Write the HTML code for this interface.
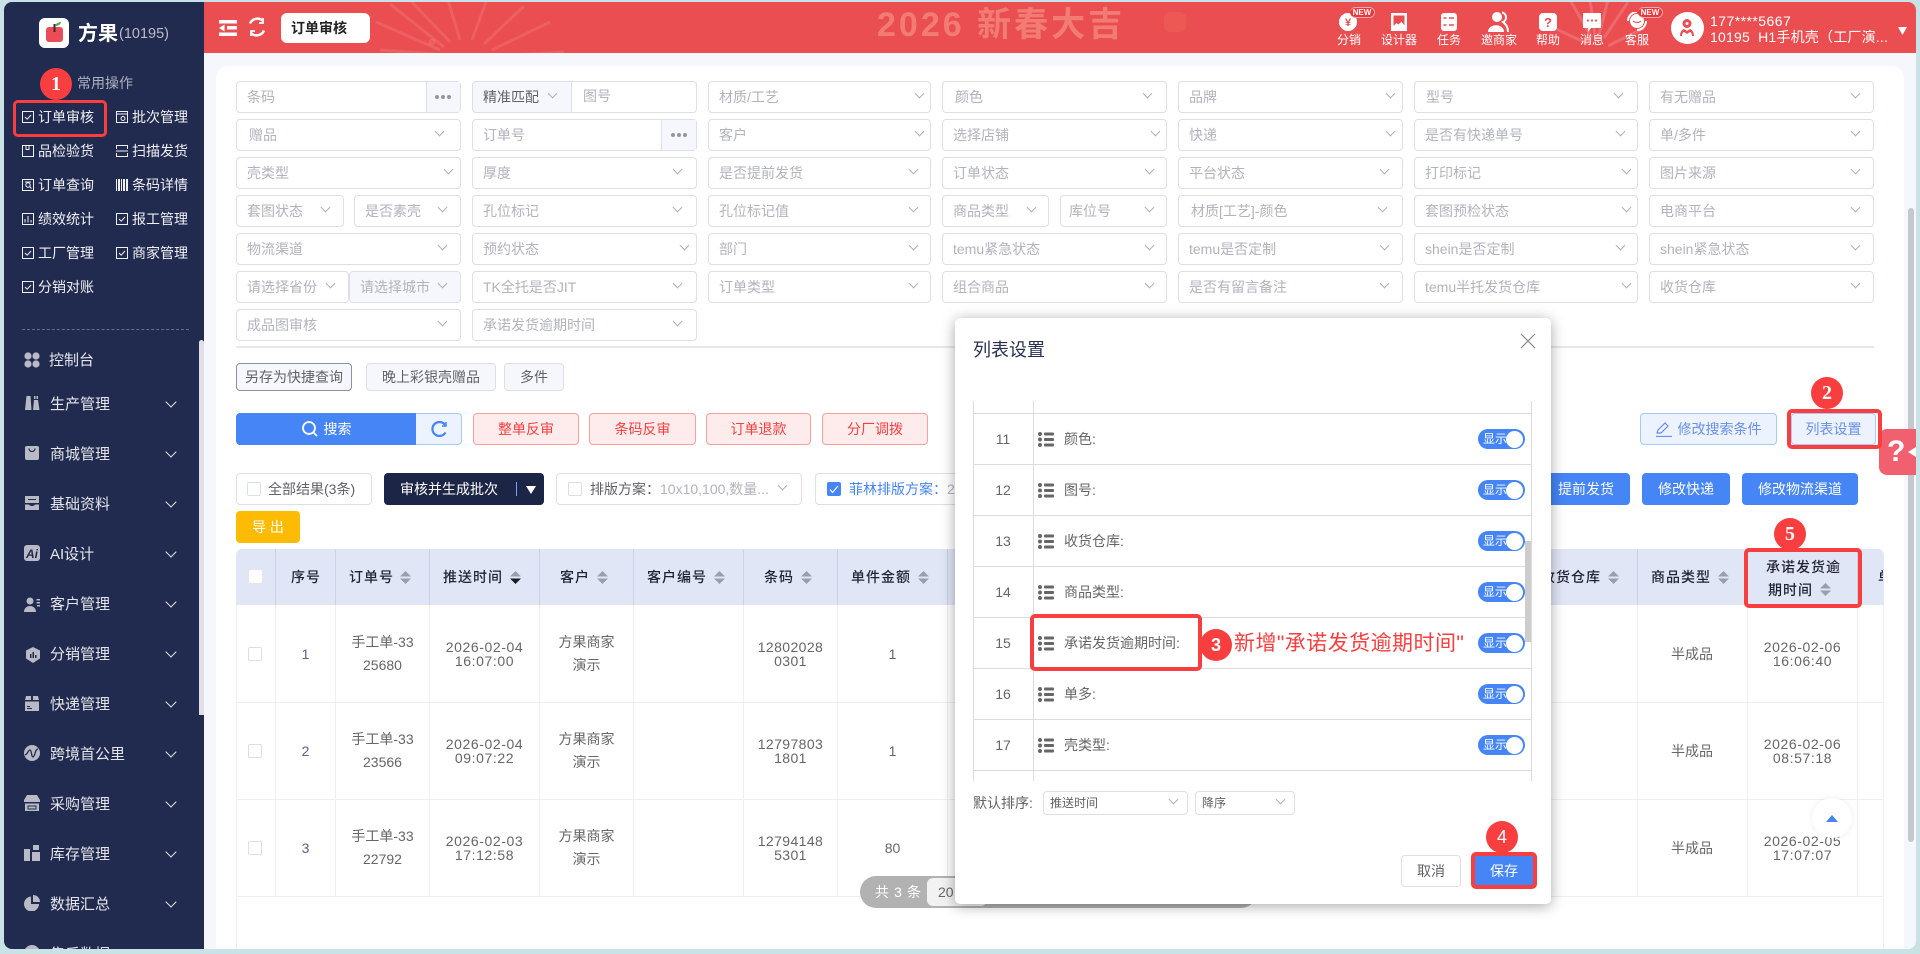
<!DOCTYPE html>
<html lang="zh"><head><meta charset="utf-8"><title>订单审核</title>
<style>
*{box-sizing:border-box}
html,body{margin:0;padding:0;width:1920px;height:954px;overflow:hidden;background:#c8e2e5;font-family:"Liberation Sans","Noto Sans CJK SC",sans-serif;font-size:14px}
.abs,.abs>*{position:absolute}
#win{position:absolute;left:0;top:0;width:1920px;height:954px;overflow:hidden}
#side{position:absolute;left:4px;top:2px;width:200px;height:947px;background:#212a4f;border-radius:8px 0 0 8px;overflow:hidden}
#main{position:absolute;left:204px;top:2px;width:1712px;height:947px;background:#f5f7fc;border-radius:0 8px 8px 0;overflow:hidden}
#card{position:absolute;left:12px;top:64px;width:1688px;height:900px;background:#fff;border-radius:12px}
#head{position:absolute;left:204px;top:2px;width:1712px;height:51px;background:#ea4e50;border-radius:0 8px 0 0;overflow:hidden}
.t{position:absolute;white-space:nowrap}
.g{position:absolute;color:#f0f0f3;font-size:14px;white-space:nowrap;line-height:20px}
.gi{position:absolute;width:12px;height:12px}
.n{position:absolute;left:50px;color:#e5e6ea;font-size:15px;line-height:20px;white-space:nowrap;margin-top:2px}
.ni{position:absolute;left:24px;width:16px;height:16px;fill:#b8bac6}
.nc{position:absolute;left:163px;width:8px;height:8px;margin-top:2px;border-right:1.3px solid #e8e9ee;border-bottom:1.3px solid #e8e9ee;transform:rotate(45deg)}
.r{position:absolute;left:0;width:0;height:32px}
.f{position:absolute;top:0;height:32px;border:1px solid #dcdfe6;border-radius:4px;background:#fff;color:#b1b3bd;font-size:14px;line-height:30px;padding-left:10px;white-space:nowrap;overflow:hidden}
.gr{background:#f5f7fc}
.a{position:absolute;top:9px;width:7px;height:7px;border-right:1px solid #aeb0b9;border-bottom:1px solid #aeb0b9;transform:rotate(45deg)}
.dots{position:absolute;top:1px;height:30px;background:#f5f7fc;border-left:1px solid #dcdfe6;color:#8b8e99}
.dots b{position:absolute;top:13px;width:4px;height:4px;border-radius:50%;background:#9296a3}
.tag{position:absolute;top:363px;height:28px;border:1px solid #dcdfe6;border-radius:4px;background:#f5f7fc;color:#606266;line-height:26px;text-align:center;font-size:14px}
.rb{position:absolute;top:413px;height:32px;background:#feecec;border:1px solid #fb9e9e;border-radius:4px;color:#f5403f;text-align:center;line-height:30px}
.bb{position:absolute;background:#4585f5;border-radius:4px;color:#fff;text-align:center;white-space:nowrap}
.lb{position:absolute;background:#ecf3fe;border:1px solid #a8c8fb;border-radius:4px;color:#6a8fe8;text-align:center;white-space:nowrap}
.box{position:absolute;top:473px;height:32px;background:#fff;border:1px solid #dcdfe6;border-radius:4px}
.cb{position:absolute;width:14px;height:14px;background:#fff;border:1px solid #dcdfe6;border-radius:2px}
.h{position:absolute;color:#1f2333;font-weight:500;letter-spacing:1px;line-height:20px;white-space:nowrap}
.v{position:absolute;width:1px;top:605px;height:291px;background:#edeff5}
.vh{position:absolute;width:1px;top:549px;height:56px;background:#ccd2e6}
.hl{position:absolute;left:236px;width:1648px;height:1px;background:#edeff5}
.c{position:absolute;transform:translate(-50%,-50%);text-align:center;white-space:nowrap;color:#666;font-size:14px}
.tm{line-height:14px;letter-spacing:.6px}
.dl{line-height:23px}
.cd{line-height:14px;letter-spacing:.4px}
.nm{color:#55648a}
.s{position:absolute;width:11px;height:13px;fill:#9a9eab}
.red{position:absolute;border:4px solid #f83e3f;border-radius:5px;background:transparent}
.ci{position:absolute;width:32px;height:32px;border-radius:50%;background:#f83e3f;color:#fff;text-align:center;line-height:32px;font-size:20px;font-family:"Liberation Serif",serif;font-weight:bold;z-index:5}
.lr{position:absolute;left:0;width:559px;height:51px;border-top:1px solid #dcdcdc}
.lr .no{position:absolute;left:0;width:60px;text-align:center;top:15px;color:#666;line-height:20px}
.lr svg{position:absolute;left:65px;top:18px;width:16px;height:15px;fill:#666}
.lr .tx{position:absolute;left:91px;top:15px;color:#666;line-height:20px;white-space:nowrap}
.sw{position:absolute;left:505px;top:15px;width:47px;height:20px;background:#4585f5;border-radius:10px;color:#fff;font-size:12px;line-height:20px;padding-left:5px}
.sw:after{content:"";position:absolute;right:2px;top:1.5px;width:17px;height:17px;background:#fff;border-radius:50%}
.hi{position:absolute;top:8px;width:20px;height:20px;fill:#fff}
.hl2{position:absolute;top:30px;color:#fff;font-size:12px;line-height:16px;transform:translateX(-50%);white-space:nowrap}
.new{position:absolute;top:5px;width:25px;height:11px;background:#e8383b;border:1px solid #f7a9aa;border-left:0;border-radius:6px;color:#fff;font-size:8px;font-weight:bold;line-height:10px;text-align:center}
</style></head><body>
<div id="win">
<svg width="0" height="0" style="position:absolute"><defs>
<symbol id="so" viewBox="0 0 11 13"><path d="M5.500 0L11 5.500H0z"/><path d="M0 7.500H11L5.500 13z"/></symbol>
<symbol id="dr" viewBox="0 0 16 15"><circle cx="2" cy="2" r="2"/><circle cx="2" cy="7.500" r="2"/><circle cx="2" cy="13" r="2"/><rect x="6" y=".5" width="10" height="3" rx="1"/><rect x="6" y="6" width="10" height="3" rx="1"/><rect x="6" y="11.500" width="10" height="3" rx="1"/></symbol>
<symbol id="ck" viewBox="0 0 12 12"><path d="M.5.5h11v11H.5z" fill="none" stroke="#f0f0f3"/><path d="M3 6l2.200 2.200L9 4" fill="none" stroke="#f0f0f3"/></symbol>
</defs></svg>

<!-- SIDEBAR -->
<div id="side">
<div style="position:absolute;left:35px;top:16px;width:30px;height:30px;background:#fff;border-radius:6px"></div>
<svg style="position:absolute;left:35px;top:16px" width="30" height="30"><rect x="7" y="9" width="17" height="15" rx="3" fill="#ec4c58"/><rect x="14.500" y="6" width="2" height="8" fill="#3c2a2a"/><path d="M16 8c1-3 4-4 6-4-.5 3-3 4-6 4z" fill="#4cae4c"/></svg>
<div class="t" style="left:74px;top:18px;color:#fff;font-size:20px;font-weight:bold;line-height:28px">方果</div>
<div class="t" style="left:115px;top:22px;color:#b9bcc9;font-size:14.500px;line-height:20px">(10195)</div>
<div class="t" style="left:73px;top:71px;color:#aeb1c0;font-size:14px;line-height:20px">常用操作</div>

<svg class="gi" style="left:18px;top:109px"><use href="#ck"/></svg><div class="g" style="left:34px;top:105px">订单审核</div>
<svg class="gi" style="left:112px;top:109px" fill="none" stroke="#f0f0f3"><path d="M.5.5h11v11H.5zM.5 3h11"/><circle cx="7" cy="7.500" r="2"/></svg><div class="g" style="left:128px;top:105px">批次管理</div>
<svg class="gi" style="left:18px;top:143px" fill="none" stroke="#f0f0f3"><path d="M.5.5h11v11H.5zM4 .5v4h3v-4"/></svg><div class="g" style="left:34px;top:139px">品检验货</div>
<svg class="gi" style="left:112px;top:143px" fill="none" stroke="#f0f0f3"><path d="M.5 4V.5h11V4M.5 8v3.500h11V8M0 6h12"/></svg><div class="g" style="left:128px;top:139px">扫描发货</div>
<svg class="gi" style="left:18px;top:177px" fill="none" stroke="#f0f0f3"><path d="M.5.5h11v11H.5z"/><circle cx="6" cy="6" r="2.200"/><path d="M7.500 7.500l2 2M3 3h6"/></svg><div class="g" style="left:34px;top:173px">订单查询</div>
<svg class="gi" style="left:112px;top:177px" fill="#f0f0f3"><rect width="1" height="12"/><rect x="2" width="2" height="12"/><rect x="5" width="1" height="12"/><rect x="7" width="2" height="12"/><rect x="10" width="2" height="12"/></svg><div class="g" style="left:128px;top:173px">条码详情</div>
<svg class="gi" style="left:18px;top:211px" fill="none" stroke="#f0f0f3"><path d="M.5.500h11v11H.5zM3 9.500V6M6 9.500V3M9 9.500V7" /></svg><div class="g" style="left:34px;top:207px">绩效统计</div>
<svg class="gi" style="left:112px;top:211px"><use href="#ck"/></svg><div class="g" style="left:128px;top:207px">报工管理</div>
<svg class="gi" style="left:18px;top:245px"><use href="#ck"/></svg><div class="g" style="left:34px;top:241px">工厂管理</div>
<svg class="gi" style="left:112px;top:245px"><use href="#ck"/></svg><div class="g" style="left:128px;top:241px">商家管理</div>
<svg class="gi" style="left:18px;top:279px"><use href="#ck"/></svg><div class="g" style="left:34px;top:275px">分销对账</div>
<div style="position:absolute;left:18px;top:327px;width:167px;border-top:1px dashed #666c88"></div>

<svg class="ni" style="left:20px;top:350px" viewBox="0 0 16 16"><circle cx="4" cy="4" r="3.600"/><circle cx="12" cy="4" r="3.600"/><circle cx="4" cy="12" r="3.600"/><circle cx="12" cy="12" r="3.600"/></svg>
<div class="n" style="left:45px;top:347px">控制台</div>

<svg class="ni" style="left:20px;top:393px" viewBox="0 0 16 16"><path d="M1 15L2.500 1H6.500L7.500 15zM9 15L10 5H14L15.500 15z"/><path d="M10 1h1.500v3H10zM12.500 1H14v3h-1.500z"/></svg>
<div class="n" style="left:46px;top:391px">生产管理</div><i class="nc" style="top:394px"></i>

<svg class="ni" style="left:20px;top:443px" viewBox="0 0 16 16"><path d="M1 3a2 2 0 0 1 2-2h10a2 2 0 0 1 2 2v10a2 2 0 0 1-2 2H3a2 2 0 0 1-2-2z"/><path d="M5 3.500c0 4 6 4 6 0" fill="none" stroke="#212a4f" stroke-width="1.200"/></svg>
<div class="n" style="left:46px;top:441px">商城管理</div><i class="nc" style="top:444px"></i>

<svg class="ni" style="left:20px;top:493px" viewBox="0 0 16 16"><path d="M1 1h14v7H1zM1 9.500h4c.5 2 5.500 2 6 0h4V15H1z"/><path d="M4 4.500h8" stroke="#212a4f"/></svg>
<div class="n" style="left:46px;top:491px">基础资料</div><i class="nc" style="top:494px"></i>

<svg class="ni" style="left:20px;top:543px" viewBox="0 0 16 16"><rect width="16" height="16" rx="3"/><text x="2" y="13" font-size="12" font-weight="bold" font-style="italic" fill="#212a4f" font-family="Liberation Sans">Ai</text></svg>
<div class="n" style="left:46px;top:541px">AI设计</div><i class="nc" style="top:544px"></i>

<svg class="ni" style="left:20px;top:595px" viewBox="0 0 16 16"><circle cx="6" cy="4" r="3.500"/><path d="M0 15c0-8 12-8 12 0z"/><path d="M12.500 2H16v1.500h-3.500zM12.500 5H16v1.500h-3.500zM13 8h3v1.500h-3z"/></svg>
<div class="n" style="left:46px;top:591px">客户管理</div><i class="nc" style="top:594px"></i>

<svg class="ni" style="left:21px;top:645px" viewBox="0 0 16 16"><path d="M8 0l7 3.500v8L8 16l-7-4.500v-8z"/><path d="M5 7h1.500v4H5zM7.500 5H9v6H7.500zM10 8h1.500v3H10z" fill="#212a4f"/></svg>
<div class="n" style="left:46px;top:641px">分销管理</div><i class="nc" style="top:644px"></i>

<svg class="ni" style="left:20px;top:693px" viewBox="0 0 16 16"><path d="M1 5l1-4h5v4zM9 5V1h5l1 4zM1 6.500h14V16H1z"/><path d="M3 11h3v1H3zM3 13h5v1H3z" fill="#212a4f"/></svg>
<div class="n" style="left:46px;top:691px">快递管理</div><i class="nc" style="top:694px"></i>

<svg class="ni" style="left:20px;top:743px" viewBox="0 0 16 16"><circle cx="8" cy="8" r="8"/><path d="M1 10c3-1 3-5 5-5s1 7 3 7 2-8 5-8" fill="none" stroke="#212a4f" stroke-width="1.300"/></svg>
<div class="n" style="left:46px;top:741px">跨境首公里</div><i class="nc" style="top:744px"></i>

<svg class="ni" style="left:20px;top:793px" viewBox="0 0 16 16"><path d="M3 0h10l3 5v2H0V5zM1 8.500h14V16H1z"/><path d="M4 11h8v3H4z" fill="none" stroke="#212a4f" stroke-width="1"/></svg>
<div class="n" style="left:46px;top:791px">采购管理</div><i class="nc" style="top:794px"></i>

<svg class="ni" style="left:20px;top:843px" viewBox="0 0 16 16"><path d="M0 4h6v12H0zM8 7h8v9H8zM9 0h6v5H9z"/></svg>
<div class="n" style="left:46px;top:841px">库存管理</div><i class="nc" style="top:844px"></i>

<svg class="ni" style="left:20px;top:893px" viewBox="0 0 16 16"><path d="M7 1.500A7.500 7.500 0 1 0 15 9H7z"/><path d="M9 0a7 7 0 0 1 7 7H9z"/></svg>
<div class="n" style="left:46px;top:891px">数据汇总</div><i class="nc" style="top:894px"></i>

<svg class="ni" style="left:20px;top:943px" viewBox="0 0 16 16"><circle cx="8" cy="8" r="8"/></svg>
<div class="n" style="left:46px;top:941px">售后数据</div>
<div style="position:absolute;left:195px;top:338px;width:5px;height:375px;background:#dfe0e6;border-radius:3px 3px 0 0"></div>
</div>

<!-- MAIN -->
<div id="main"><div id="card"></div>
<div style="position:absolute;left:1704px;top:206px;width:6px;height:634px;background:#c6c8cd;border-radius:3px"></div>
</div>

<!-- HEADER -->
<div id="head">
<svg style="position:absolute;left:0;top:0" width="1712" height="51" fill="none" stroke="#fff" stroke-opacity=".1" stroke-width="3">
<path d="M236 48L172 20M240 45L186 2M246 40L206-2M256 38L244-2M268 38L282 0M280 42L320 4M288 48L346 20M232 52L176 48M292 54L360 50"/>
<path d="M1388 36L1366-2M1391 33L1386-2M1395 33L1404-2M1400 36L1424 0M1384 42L1350 26M1404 44L1440 26" stroke-opacity=".16"/>
<circle cx="228" cy="40" r="2"/>
<rect x="960" y="10" width="22" height="20" rx="6" fill="#ef6258" fill-opacity=".5" stroke="none"/>
</svg>
<div class="t" style="left:673px;top:1px;color:#f27c74;font-size:34px;font-weight:bold;line-height:44px;letter-spacing:3px">2026 新春大吉</div>
<svg style="position:absolute;left:15px;top:18px" width="18" height="16" fill="#fff"><path d="M0 0h18v3.500H0zM8 6h10v3.500H8zM0 12.500h18V16H0zM5.500 4.500v7L0 8z"/></svg>
<svg style="position:absolute;left:43px;top:15px" width="20" height="20" fill="none" stroke="#fff" stroke-width="2.500"><path d="M3 6.500A8 8 0 0 1 16 4M17 13.500A8 8 0 0 1 4 16"/><path d="M16 1v5h-4M4 19v-5h4" stroke-width="1.800" /></svg>
<div style="position:absolute;left:77px;top:11px;width:89px;height:30px;background:#fff;border-radius:6px;color:#222;font-weight:bold;line-height:30px;padding-left:10px;font-size:14px">订单审核</div>

<svg class="hi" style="left:1134px;top:10px" viewBox="0 0 20 20"><circle cx="10" cy="10" r="9"/><text x="10" y="14" text-anchor="middle" font-size="11" font-weight="bold" fill="#ea4e50" font-family="Liberation Sans">¥</text></svg>
<div class="new" style="left:1146px">NEW</div>
<div class="hl2" style="left:1145px">分销</div>
<svg class="hi" style="left:1185px;top:10px" viewBox="0 0 20 20"><path d="M2 1h16v18H2z"/><path d="M4.500 3.500h11v10l-3-4-3 3-2-1.500-3 3z" fill="#ea4e50"/></svg>
<div class="hl2" style="left:1195px">设计器</div>
<svg class="hi" style="left:1235px;top:10px" viewBox="0 0 20 20"><rect x="2" y="1" width="16" height="18" rx="3"/><path d="M4.500 6h3M10 6h5M4.500 13h3M10 13h5" stroke="#ea4e50" stroke-width="1.500"/></svg>
<div class="hl2" style="left:1245px">任务</div>
<svg class="hi" style="left:1284px;top:9px;width:22px;height:22px" viewBox="0 0 22 22"><circle cx="9" cy="6" r="5"/><path d="M0 21c0-9 16-9 16 0z"/><path d="M14 1.500a5 5 0 0 1 1 9.500c3 2 5 5 5 10" fill="none" stroke="#fff" stroke-width="2"/></svg>
<div class="hl2" style="left:1295px">邀商家</div>
<svg class="hi" style="left:1334px;top:10px" viewBox="0 0 20 20"><rect x="1" y="1" width="18" height="18" rx="4"/><text x="10" y="15" text-anchor="middle" font-size="13" font-weight="bold" fill="#ea4e50" font-family="Liberation Sans">?</text></svg>
<div class="hl2" style="left:1344px">帮助</div>
<svg class="hi" style="left:1378px;top:10px" viewBox="0 0 20 20"><path d="M1 1h18v15H9l-3 4v-4H1z"/><circle cx="6" cy="8.500" r="1.100" fill="#ea4e50"/><circle cx="10" cy="8.500" r="1.100" fill="#ea4e50"/><circle cx="14" cy="8.500" r="1.100" fill="#ea4e50"/></svg>
<div class="hl2" style="left:1388px">消息</div>
<svg class="hi" style="left:1423px;top:10px" viewBox="0 0 20 20"><circle cx="10" cy="9" r="7"/><path d="M1 9a9 9 0 0 1 9-9M19 9a9 9 0 0 1-9 9" fill="none" stroke="#fff" stroke-width="2"/><path d="M6 9c2 2 6 2 8 0" stroke="#ea4e50" fill="none"/></svg>
<div class="new" style="left:1434px">NEW</div>
<div class="hl2" style="left:1433px">客服</div>

<div style="position:absolute;left:1467px;top:10px;width:33px;height:32px;background:#fff;border-radius:50%"></div>
<svg style="position:absolute;left:1475px;top:17px" width="16" height="18" fill="#ea4e50"><path fill-rule="evenodd" d="M8 0a4.500 4.500 0 1 1 0 9 4.500 4.500 0 0 1 0-9zm0 3a1.500 1.500 0 1 0 0 3 1.500 1.500 0 0 0 0-3z"/><path d="M1 17c0-5 3-7 4-7l3 2 3-2c1 0 4 2 4 7h-2c0-2-1-4-2-4l-3 2-3-2c-1 0-2 2-2 4z"/></svg>
<div class="t" style="left:1506px;top:9px;color:#fff;font-size:14px;line-height:20px;letter-spacing:.45px">177****5667</div>
<div class="t" style="left:1506px;top:25px;color:#fff;font-size:14px;line-height:20px;letter-spacing:.2px">10195&nbsp; H1手机壳（工厂演...</div>
<svg style="position:absolute;left:1694px;top:25px" width="9" height="8" fill="#fff"><path d="M0 0h9L4.500 8z"/></svg>
</div>

<!-- FORM -->
<div class="r" style="top:81px">
<div class="f" style="left:236px;width:225px">条码</div><div class="dots" style="left:426px;width:34px"><b style="left:8px"></b><b style="left:14px"></b><b style="left:20px"></b></div>
<div class="f gr" style="left:472px;width:225px;color:#606266">精准匹配</div><div style="position:absolute;left:571px;top:1px;width:125px;height:30px;background:#fff;border-left:1px solid #dcdfe6;color:#b1b3bd;padding-left:11px;line-height:28px;border-radius:0 3px 3px 0">图号</div><i class="a" style="left:549px"></i>
<div class="f" style="left:708px;width:223px">材质/工艺</div><i class="a" style="left:916px"></i>
<div class="f" style="left:942px;width:225px;padding-left:12px">颜色</div><i class="a" style="left:1144px"></i>
<div class="f" style="left:1178px;width:225px">品牌</div><i class="a" style="left:1387px"></i>
<div class="f" style="left:1414px;width:224px;padding-left:11px">型号</div><i class="a" style="left:1615px"></i>
<div class="f" style="left:1649px;width:225px">有无赠品</div><i class="a" style="left:1852px"></i>
</div>
<div class="r" style="top:119px">
<div class="f" style="left:236px;width:225px;padding-left:12px">赠品</div><i class="a" style="left:436px"></i>
<div class="f" style="left:472px;width:225px">订单号</div><div class="dots" style="left:661px;width:35px"><b style="left:9px"></b><b style="left:15px"></b><b style="left:21px"></b></div>
<div class="f" style="left:708px;width:223px">客户</div><i class="a" style="left:916px"></i>
<div class="f" style="left:942px;width:225px">选择店铺</div><i class="a" style="left:1152px"></i>
<div class="f" style="left:1178px;width:225px">快递</div><i class="a" style="left:1387px"></i>
<div class="f" style="left:1414px;width:224px">是否有快递单号</div><i class="a" style="left:1617px"></i>
<div class="f" style="left:1649px;width:225px">单/多件</div><i class="a" style="left:1852px"></i>
</div>
<div class="r" style="top:157px">
<div class="f" style="left:236px;width:225px">壳类型</div><i class="a" style="left:445px"></i>
<div class="f" style="left:472px;width:225px">厚度</div><i class="a" style="left:674px"></i>
<div class="f" style="left:708px;width:223px">是否提前发货</div><i class="a" style="left:910px"></i>
<div class="f" style="left:942px;width:225px">订单状态</div><i class="a" style="left:1146px"></i>
<div class="f" style="left:1178px;width:225px">平台状态</div><i class="a" style="left:1381px"></i>
<div class="f" style="left:1414px;width:224px">打印标记</div><i class="a" style="left:1623px"></i>
<div class="f" style="left:1649px;width:225px">图片来源</div><i class="a" style="left:1852px"></i>
</div>
<div class="r" style="top:195px">
<div class="f" style="left:236px;width:108px">套图状态</div><i class="a" style="left:322px"></i>
<div class="f" style="left:354px;width:107px">是否素壳</div><i class="a" style="left:439px"></i>
<div class="f" style="left:472px;width:225px">孔位标记</div><i class="a" style="left:674px"></i>
<div class="f" style="left:708px;width:223px">孔位标记值</div><i class="a" style="left:910px"></i>
<div class="f" style="left:942px;width:107px">商品类型</div><i class="a" style="left:1028px"></i>
<div class="f" style="left:1060px;width:107px;padding-left:8px">库位号</div><i class="a" style="left:1146px"></i>
<div class="f" style="left:1178px;width:225px;padding-left:12px">材质[工艺]-颜色</div><i class="a" style="left:1379px"></i>
<div class="f" style="left:1414px;width:224px">套图预检状态</div><i class="a" style="left:1623px"></i>
<div class="f" style="left:1649px;width:225px">电商平台</div><i class="a" style="left:1852px"></i>
</div>
<div class="r" style="top:233px">
<div class="f" style="left:236px;width:225px">物流渠道</div><i class="a" style="left:439px"></i>
<div class="f" style="left:472px;width:225px">预约状态</div><i class="a" style="left:681px"></i>
<div class="f" style="left:708px;width:223px">部门</div><i class="a" style="left:910px"></i>
<div class="f" style="left:942px;width:225px">temu紧急状态</div><i class="a" style="left:1146px"></i>
<div class="f" style="left:1178px;width:225px">temu是否定制</div><i class="a" style="left:1381px"></i>
<div class="f" style="left:1414px;width:224px">shein是否定制</div><i class="a" style="left:1617px"></i>
<div class="f" style="left:1649px;width:225px">shein紧急状态</div><i class="a" style="left:1852px"></i>
</div>
<div class="r" style="top:271px">
<div class="f" style="left:236px;width:113px">请选择省份</div><i class="a" style="left:327px"></i>
<div class="f gr" style="left:349px;width:112px">请选择城市</div><i class="a" style="left:439px"></i>
<div class="f" style="left:472px;width:225px">TK全托是否JIT</div><i class="a" style="left:674px"></i>
<div class="f" style="left:708px;width:223px">订单类型</div><i class="a" style="left:910px"></i>
<div class="f" style="left:942px;width:225px">组合商品</div><i class="a" style="left:1146px"></i>
<div class="f" style="left:1178px;width:225px">是否有留言备注</div><i class="a" style="left:1381px"></i>
<div class="f" style="left:1414px;width:224px">temu半托发货仓库</div><i class="a" style="left:1623px"></i>
<div class="f" style="left:1649px;width:225px">收货仓库</div><i class="a" style="left:1852px"></i>
</div>
<div class="r" style="top:309px">
<div class="f" style="left:236px;width:225px">成品图审核</div><i class="a" style="left:439px"></i>
<div class="f" style="left:472px;width:225px">承诺发货逾期时间</div><i class="a" style="left:674px"></i>
</div>
<div style="position:absolute;left:236px;top:346px;width:1638px;height:2px;background:#e6e8ef"></div>

<!-- TAGS -->
<div class="tag" style="left:236px;width:116px;border-color:#8d919f">另存为快捷查询</div>
<div class="tag" style="left:366px;width:130px">晚上彩银壳赠品</div>
<div class="tag" style="left:504px;width:60px">多件</div>

<!-- ACTIONS -->
<div class="bb" style="left:236px;top:413px;width:180px;height:32px;line-height:32px;border-radius:4px 0 0 4px;padding-left:23px">搜索</div>
<svg style="position:absolute;left:302px;top:421px" width="16" height="16" fill="none" stroke="#fff" stroke-width="1.800"><circle cx="7" cy="7" r="6"/><path d="M11 11l4 4"/></svg>
<div style="position:absolute;left:416px;top:413px;width:46px;height:32px;background:#ecf3fe;border:1px solid #a8c8fb;border-left:0;border-radius:0 4px 4px 0"></div>
<svg style="position:absolute;left:431px;top:421px" width="16" height="16" fill="none" stroke="#4585f5" stroke-width="2.200"><path d="M14.500 4.500A7 7 0 1 0 14.500 11.500"/><path d="M15 1v4h-4" stroke-width="1.500"/></svg>
<div class="rb" style="left:473px;width:106px">整单反审</div>
<div class="rb" style="left:589px;width:107px">条码反审</div>
<div class="rb" style="left:706px;width:105px">订单退款</div>
<div class="rb" style="left:822px;width:106px">分厂调拨</div>
<div class="lb" style="left:1640px;top:413px;width:137px;height:32px;line-height:30px;padding-left:22px">修改搜索条件</div>
<svg style="position:absolute;left:1656px;top:421px" width="16" height="16" fill="none" stroke="#6a8fe8" stroke-width="1.200"><path d="M1 12l1-3 7-7 3 3-7 7zM0 15.500h16"/></svg>
<div class="lb" style="left:1791px;top:413px;width:85px;height:32px;line-height:30px">列表设置</div>

<!-- OP ROW -->
<div class="box" style="left:236px;width:136px"></div><div class="cb" style="left:247px;top:482px"></div>
<div class="t" style="left:268px;top:479px;color:#606266;line-height:20px">全部结果(3条)</div>
<div style="position:absolute;left:384px;top:473px;width:160px;height:32px;background:#1c2546;border-radius:4px;color:#fff;line-height:32px;padding-left:16px">审核并生成批次</div>
<div style="position:absolute;left:516px;top:482px;width:1px;height:14px;background:#6fa4ff"></div>
<svg style="position:absolute;left:526px;top:486px" width="10" height="8" fill="#fff"><path d="M0 0h10L5 8z"/></svg>
<div class="box" style="left:556px;width:246px"></div><div class="cb" style="left:568px;top:482px"></div>
<div class="t" style="left:590px;top:479px;color:#606266;line-height:20px">排版方案：<span style="color:#b1b3bd">10x10,100,数量...</span></div>
<i class="a" style="left:779px;top:482px"></i>
<div class="box" style="left:815px;width:300px"></div>
<div class="cb" style="left:827px;top:482px;background:#4585f5;border-color:#4585f5"></div>
<svg style="position:absolute;left:829px;top:485px" width="10" height="9" fill="none" stroke="#fff" stroke-width="1.200"><path d="M1 4.500l2.500 3L9 1"/></svg>
<div class="t" style="left:849px;top:479px;color:#4585f5;line-height:20px">菲林排版方案：<span style="color:#b1b3bd">2</span></div>
<div class="bb" style="left:1542px;top:473px;width:88px;height:32px;line-height:32px">提前发货</div>
<div class="bb" style="left:1642px;top:473px;width:88px;height:32px;line-height:32px">修改快递</div>
<div class="bb" style="left:1742px;top:473px;width:116px;height:32px;line-height:32px">修改物流渠道</div>
<div style="position:absolute;left:236px;top:511px;width:64px;height:32px;background:#fdbc03;border-radius:4px;color:#fff;text-align:center;line-height:32px">导 出</div>

<!-- TABLE -->
<div style="position:absolute;left:236px;top:549px;width:1648px;height:56px;background:#e1e6f6;border-radius:6px 6px 0 0"></div>
<div style="position:absolute;left:236px;top:605px;width:1px;height:344px;background:#edeff5"></div>
<div style="position:absolute;left:1883px;top:605px;width:1px;height:344px;background:#edeff5"></div>
<div class="vh" style="left:275px"></div><div class="vh" style="left:335px"></div><div class="vh" style="left:429px"></div><div class="vh" style="left:539px"></div><div class="vh" style="left:633px"></div><div class="vh" style="left:743px"></div><div class="vh" style="left:837px"></div><div class="vh" style="left:947px"></div><div class="vh" style="left:1637px"></div><div class="vh" style="left:1747px"></div><div class="vh" style="left:1857px"></div>
<div class="v" style="left:275px"></div><div class="v" style="left:335px"></div><div class="v" style="left:429px"></div><div class="v" style="left:539px"></div><div class="v" style="left:633px"></div><div class="v" style="left:743px"></div><div class="v" style="left:837px"></div><div class="v" style="left:947px"></div><div class="v" style="left:1637px"></div><div class="v" style="left:1747px"></div><div class="v" style="left:1857px"></div>
<div class="hl" style="top:702px"></div><div class="hl" style="top:799px"></div><div class="hl" style="top:896px"></div>
<div class="cb" style="left:249px;top:570px;width:13px;height:13px;border-color:#fff"></div>
<div class="h" style="left:291px;top:567px">序号</div>
<div class="h" style="left:349px;top:567px">订单号</div><svg class="s" style="left:400px;top:571px"><use href="#so"/></svg>
<div class="h" style="left:443px;top:567px">推送时间</div><svg class="s" style="left:510px;top:571px" fill="#9a9eab"><path d="M5.500 0L11 5.500H0z"/><path d="M0 7.500H11L5.500 13z" fill="#1c1c24"/></svg>
<div class="h" style="left:560px;top:567px">客户</div><svg class="s" style="left:597px;top:571px"><use href="#so"/></svg>
<div class="h" style="left:647px;top:567px">客户编号</div><svg class="s" style="left:714px;top:571px"><use href="#so"/></svg>
<div class="h" style="left:764px;top:567px">条码</div><svg class="s" style="left:801px;top:571px"><use href="#so"/></svg>
<div class="h" style="left:851px;top:567px">单件金额</div><svg class="s" style="left:918px;top:571px"><use href="#so"/></svg>
<div class="h" style="left:1541px;top:567px">收货仓库</div><svg class="s" style="left:1608px;top:571px"><use href="#so"/></svg>
<div class="h" style="left:1651px;top:567px">商品类型</div><svg class="s" style="left:1718px;top:571px"><use href="#so"/></svg>
<div class="h" style="left:1766px;top:557px">承诺发货逾</div>
<div class="h" style="left:1768px;top:580px">期时间</div><svg class="s" style="left:1820px;top:583px"><use href="#so"/></svg>
<div class="h" style="left:1878px;top:567px;width:5px;overflow:hidden">单</div>

<div class="cb" style="left:248px;top:647px"></div><div class="cb" style="left:248px;top:744px"></div><div class="cb" style="left:248px;top:841px"></div>
<div class="c nm" style="left:305.500px;top:653.500px">1</div><div class="c nm" style="left:305.500px;top:750.500px">2</div><div class="c nm" style="left:305.500px;top:847.500px">3</div>
<div class="c dl" style="left:382.500px;top:654px">手工单-33<br>25680</div>
<div class="c dl" style="left:382.500px;top:751px">手工单-33<br>23566</div>
<div class="c dl" style="left:382.500px;top:848px">手工单-33<br>22792</div>
<div class="c tm" style="left:484.500px;top:653.500px">2026-02-04<br>16:07:00</div>
<div class="c tm" style="left:484.500px;top:750.500px">2026-02-04<br>09:07:22</div>
<div class="c tm" style="left:484.500px;top:847.500px">2026-02-03<br>17:12:58</div>
<div class="c dl" style="left:586.500px;top:654px">方果商家<br>演示</div>
<div class="c dl" style="left:586.500px;top:751px">方果商家<br>演示</div>
<div class="c dl" style="left:586.500px;top:848px">方果商家<br>演示</div>
<div class="c cd" style="left:790.500px;top:653.500px">12802028<br>0301</div>
<div class="c cd" style="left:790.500px;top:750.500px">12797803<br>1801</div>
<div class="c cd" style="left:790.500px;top:847.500px">12794148<br>5301</div>
<div class="c" style="left:892.500px;top:653.500px">1</div><div class="c" style="left:892.500px;top:750.500px">1</div><div class="c" style="left:892.500px;top:847.500px">80</div>
<div class="c" style="left:1692px;top:654px">半成品</div><div class="c" style="left:1692px;top:751px">半成品</div><div class="c" style="left:1692px;top:848px">半成品</div>
<div class="c tm" style="left:1802.500px;top:653.500px">2026-02-06<br>16:06:40</div>
<div class="c tm" style="left:1802.500px;top:750.500px">2026-02-06<br>08:57:18</div>
<div class="c tm" style="left:1802.500px;top:847.500px">2026-02-05<br>17:07:07</div>

<!-- PAGER -->
<div style="position:absolute;left:860px;top:876px;width:397px;height:32px;background:#b2b2b2;border-radius:16px;color:#fff;line-height:32px;padding-left:15px;letter-spacing:.6px">共 3 条</div>
<div style="position:absolute;left:927px;top:878px;width:60px;height:28px;background:#f2f2f2;border-radius:6px;color:#666;line-height:28px;padding-left:11px">20</div>

<!-- SCROLLTOP -->
<div style="position:absolute;left:1812px;top:798px;width:40px;height:40px;background:#fff;border-radius:50%;box-shadow:0 0 6px rgba(0,0,0,.08)"></div>
<svg style="position:absolute;left:1826px;top:815px" width="12" height="7" fill="#4585f5"><path d="M6 0l6 7H0z"/></svg>

<!-- HELP -->
<div style="position:absolute;left:1879px;top:429px;width:37px;height:46px;background:#f0606f;border-radius:8px 0 0 8px;color:#fff;font-size:30px;font-weight:bold;line-height:46px;padding-left:8px">?</div>
<svg style="position:absolute;left:1908px;top:447px" width="8" height="10" fill="#fff"><path d="M8 0v10L0 5z"/></svg>

<!-- DIALOG -->
<div style="position:absolute;left:955px;top:318px;width:596px;height:586px;background:#fff;border-radius:5px;box-shadow:0 2px 14px rgba(0,0,0,.35)"></div>
<div class="t" style="left:973px;top:337px;color:#2a3050;font-size:18px;line-height:26px">列表设置</div>
<svg style="position:absolute;left:1520px;top:333px" width="16" height="16" fill="none" stroke="#8a8a8a" stroke-width="1.200"><path d="M1 1l14 14M15 1L1 15"/></svg>
<div style="position:absolute;left:973px;top:401px;width:559px;height:380px;overflow:hidden">
<div style="position:absolute;left:0;top:0;width:1px;height:380px;background:#dcdcdc"></div>
<div style="position:absolute;left:60px;top:0;width:1px;height:380px;background:#dcdcdc"></div>
<div style="position:absolute;left:558px;top:0;width:1px;height:380px;background:#dcdcdc"></div>
<div class="lr" style="top:12px"><div class="no">11</div><svg viewBox="0 0 16 15"><use href="#dr"/></svg><div class="tx">颜色:</div><div class="sw">显示</div></div>
<div class="lr" style="top:63px"><div class="no">12</div><svg viewBox="0 0 16 15"><use href="#dr"/></svg><div class="tx">图号:</div><div class="sw">显示</div></div>
<div class="lr" style="top:114px"><div class="no">13</div><svg viewBox="0 0 16 15"><use href="#dr"/></svg><div class="tx">收货仓库:</div><div class="sw">显示</div></div>
<div class="lr" style="top:165px"><div class="no">14</div><svg viewBox="0 0 16 15"><use href="#dr"/></svg><div class="tx">商品类型:</div><div class="sw">显示</div></div>
<div class="lr" style="top:216px"><div class="no">15</div><svg viewBox="0 0 16 15"><use href="#dr"/></svg><div class="tx">承诺发货逾期时间:</div><div class="sw">显示</div></div>
<div class="lr" style="top:267px"><div class="no">16</div><svg viewBox="0 0 16 15"><use href="#dr"/></svg><div class="tx">单多:</div><div class="sw">显示</div></div>
<div class="lr" style="top:318px"><div class="no">17</div><svg viewBox="0 0 16 15"><use href="#dr"/></svg><div class="tx">壳类型:</div><div class="sw">显示</div></div>
<div class="lr" style="top:369px"></div>
<div style="position:absolute;left:552px;top:140px;width:6px;height:101px;background:#cdcdcd"></div>
</div>
<div class="t" style="left:973px;top:793px;color:#606266;font-size:14px;line-height:20px">默认排序:</div>
<div style="position:absolute;left:1043px;top:791px;width:145px;height:24px;border:1px solid #dcdfe6;border-radius:4px;color:#606266;font-size:12px;line-height:22px;padding-left:6px">推送时间</div><i class="a" style="left:1170px;top:796px"></i>
<div style="position:absolute;left:1195px;top:791px;width:100px;height:24px;border:1px solid #dcdfe6;border-radius:4px;color:#606266;font-size:12px;line-height:22px;padding-left:6px">降序</div><i class="a" style="left:1277px;top:796px"></i>
<div style="position:absolute;left:1401px;top:855px;width:60px;height:32px;border:1px solid #dcdfe6;border-radius:4px;color:#606266;text-align:center;line-height:30px">取消</div>
<div class="bb" style="left:1474px;top:855px;width:60px;height:32px;line-height:32px">保存</div>

<!-- ANNOTATIONS -->
<div class="red" style="left:13px;top:100px;width:94px;height:37px;border-width:3px"></div>
<div class="ci" style="left:40px;top:68px">1</div>
<div class="red" style="left:1787px;top:409px;width:95px;height:40px"></div>
<div class="ci" style="left:1811px;top:377px">2</div>
<div class="red" style="left:1030px;top:614px;width:172px;height:57px"></div>
<div class="ci" style="left:1200px;top:629px;font-family:'Liberation Sans',sans-serif;font-size:18px">3</div>
<div class="t" style="left:1234px;top:629px;color:#f83e3f;font-size:21px;line-height:30px;letter-spacing:.45px">新增"承诺发货逾期时间"</div>
<div class="red" style="left:1471px;top:852px;width:66px;height:37px"></div>
<div class="ci" style="left:1486px;top:821px;font-family:'Liberation Sans',sans-serif;font-size:18px;font-weight:normal">4</div>
<div class="red" style="left:1744px;top:548px;width:118px;height:60px"></div>
<div class="ci" style="left:1774px;top:518px">5</div>
</div>
</body></html>
